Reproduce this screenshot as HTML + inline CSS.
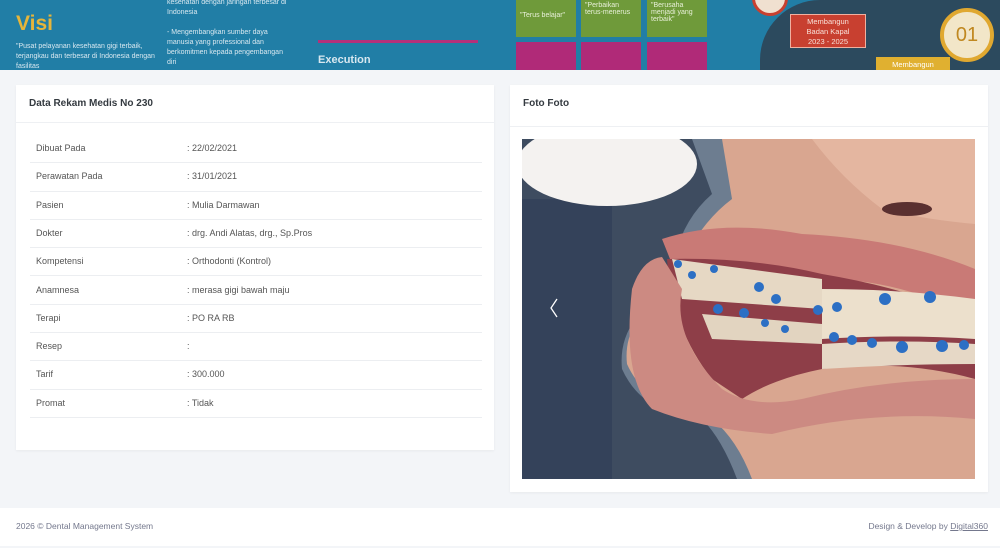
<!DOCTYPE html>
<html><head><meta charset="utf-8"><style>
*{margin:0;padding:0;box-sizing:border-box}
body{width:1000px;height:548px;overflow:hidden;background:#f3f5f8;font-family:"Liberation Sans",sans-serif;color:#495057;position:relative}
.banner{position:absolute;left:0;top:0;width:1000px;height:70px;background:#217ea6;overflow:hidden}
.banner div{position:absolute}
.card{position:absolute;background:#fff;box-shadow:0 1px 3px rgba(0,0,0,.05)}
.ct{font-size:10px;font-weight:bold;color:#343a40;position:absolute;left:13px;top:13px}
.row{position:absolute;left:14px;width:452px;height:28.3px;border-bottom:1px solid #eceef1;font-size:9px;color:#555}
.row span{position:absolute;top:8px}
.footer{position:absolute;left:0;top:508px;width:1000px;height:38px;background:#fff;font-size:8.5px;color:#74788d}
</style></head><body>
<div class="banner">
  <div style="left:16px;top:12px;font-size:21px;font-weight:bold;color:#e6b53a">Visi</div>
  <div style="left:16px;top:42px;font-size:7px;color:#d8e8f0;line-height:10px;width:140px">"Pusat pelayanan kesehatan gigi terbaik, terjangkau dan terbesar di Indonesia dengan fasilitas</div>
  <div style="left:167px;top:-2px;font-size:7px;color:#d8e8f0;line-height:10px;width:125px">kesehatan dengan jaringan terbesar di Indonesia<br><br>- Mengembangkan sumber daya manusia yang professional dan berkomitmen kepada pengembangan diri</div>
  <div style="left:318px;top:40px;width:160px;height:3px;background:#b5307a"></div>
  <div style="left:318px;top:54px;font-size:11px;font-weight:bold;color:#d8e8f0">Execution</div>
  <div style="left:516px;top:0;width:60px;height:37px;background:#6f9a3a;color:#e8f0d8;font-size:7px;padding:12px 4px 0">"Terus belajar"</div>
  <div style="left:581px;top:0;width:60px;height:37px;background:#6f9a3a;color:#e8f0d8;font-size:7px;padding:2px 4px 0">"Perbaikan terus-menerus</div>
  <div style="left:647px;top:0;width:60px;height:37px;background:#6f9a3a;color:#e8f0d8;font-size:7px;padding:2px 4px 0">"Berusaha menjadi yang terbaik"</div>
  <div style="left:516px;top:42px;width:60px;height:28px;background:#b02a78"></div>
  <div style="left:581px;top:42px;width:60px;height:28px;background:#b02a78"></div>
  <div style="left:647px;top:42px;width:60px;height:28px;background:#b02a78"></div>
  <div style="left:760px;top:0;width:240px;height:70px;background:#2c4a5e;border-radius:60px 0 0 0"></div>
  <div style="left:752px;top:-20px;width:36px;height:36px;border-radius:50%;border:3px solid #c84030;background:#f0e0d0"></div>
  <div style="left:790px;top:14px;width:76px;height:34px;background:#c84030;border:1px solid #f0b0a0;color:#f8e0d8;font-size:7.5px;text-align:center;line-height:10px;padding-top:2px">Membangun<br>Badan Kapal<br>2023 - 2025</div>
  <div style="left:940px;top:8px;width:54px;height:54px;border-radius:50%;border:4px solid #e0a830;background:#f2e6c8;color:#c08820;font-size:20px;text-align:center;line-height:46px">01</div>
  <div style="left:876px;top:57px;width:74px;height:16px;background:#e0b030;color:#fff;font-size:7.5px;text-align:center;padding-top:3px">Membangun</div>
</div>

<div class="card" style="left:16px;top:85px;width:478px;height:365px">
  <div class="ct">Data Rekam Medis No 230</div>
  <div style="position:absolute;left:0;top:37px;width:478px;border-top:1px solid #eef0f3"></div>
  <div class="row" style="top:50px"><span style="left:6px">Dibuat Pada</span><span style="left:157px">: 22/02/2021</span></div>
  <div class="row" style="top:78.3px"><span style="left:6px">Perawatan Pada</span><span style="left:157px">: 31/01/2021</span></div>
  <div class="row" style="top:106.6px"><span style="left:6px">Pasien</span><span style="left:157px">: Mulia Darmawan</span></div>
  <div class="row" style="top:134.9px"><span style="left:6px">Dokter</span><span style="left:157px">: drg. Andi Alatas, drg., Sp.Pros</span></div>
  <div class="row" style="top:163.2px"><span style="left:6px">Kompetensi</span><span style="left:157px">: Orthodonti (Kontrol)</span></div>
  <div class="row" style="top:191.5px"><span style="left:6px">Anamnesa</span><span style="left:157px">: merasa gigi bawah maju</span></div>
  <div class="row" style="top:219.8px"><span style="left:6px">Terapi</span><span style="left:157px">: PO RA RB</span></div>
  <div class="row" style="top:248.1px"><span style="left:6px">Resep</span><span style="left:157px">:</span></div>
  <div class="row" style="top:276.4px"><span style="left:6px">Tarif</span><span style="left:157px">: 300.000</span></div>
  <div class="row" style="top:304.7px"><span style="left:6px">Promat</span><span style="left:157px">: Tidak</span></div>
</div>

<div class="card" style="left:510px;top:85px;width:478px;height:407px">
  <div class="ct">Foto Foto</div>
  <div style="position:absolute;left:0;top:41px;width:478px;border-top:1px solid #eef0f3"></div>
  <svg style="position:absolute;left:12px;top:54px" width="453" height="340" viewBox="0 0 453 340">
    <rect width="453" height="340" fill="#3e4c60"/>
    <rect x="0" y="60" width="90" height="280" fill="#34425a"/>
    <ellipse cx="85" cy="25" rx="90" ry="42" fill="#f4f2f0"/>
    <path d="M170 0 L453 0 L453 340 L215 340 Q200 300 180 280 Q120 275 100 230 Q95 180 150 150 Q150 90 190 55 Z" fill="#6d7d90"/>
    <path d="M200 0 L453 0 L453 340 L230 340 Q215 300 190 280 Q125 270 105 225 Q100 180 150 150 Q170 90 210 60 Z" fill="#d9a690"/>
    <path d="M290 0 Q320 40 360 70 Q400 80 453 85 L453 0 Z" fill="#e4b6a0"/>
    <ellipse cx="385" cy="70" rx="25" ry="7" fill="#5a3030"/>
    <path d="M140 100 Q200 80 280 95 Q380 100 453 130 L453 180 Q380 140 300 140 Q220 130 150 125 Z" fill="#c97a76"/>
    <path d="M145 120 Q230 118 300 135 Q390 150 453 180 L453 240 Q380 220 300 230 Q250 240 220 260 L190 240 Q150 190 145 120 Z" fill="#8e3e48"/>
    <path d="M150 120 L300 140 L300 170 L160 160 Z" fill="#e6d8c4"/>
    <path d="M300 150 Q380 150 453 160 L453 200 Q380 195 300 200 Z" fill="#ece0cc"/>
    <path d="M180 175 L300 185 L300 205 L190 200 Z" fill="#e2d4c0"/>
    <path d="M300 205 Q380 200 453 205 L453 225 Q380 225 300 230 Z" fill="#e6d8c6"/>
    <g fill="#2c6fc4">
      <circle cx="156" cy="125" r="4"/><circle cx="170" cy="136" r="4"/><circle cx="192" cy="130" r="4"/><circle cx="237" cy="148" r="5"/><circle cx="254" cy="160" r="5"/><circle cx="196" cy="170" r="5"/><circle cx="222" cy="174" r="5"/><circle cx="243" cy="184" r="4"/><circle cx="263" cy="190" r="4"/><circle cx="296" cy="171" r="5"/><circle cx="315" cy="168" r="5"/><circle cx="363" cy="160" r="6"/><circle cx="408" cy="158" r="6"/><circle cx="312" cy="198" r="5"/><circle cx="330" cy="201" r="5"/><circle cx="350" cy="204" r="5"/><circle cx="380" cy="208" r="6"/><circle cx="420" cy="207" r="6"/><circle cx="442" cy="206" r="5"/>
    </g>
    <path d="M110 150 Q120 120 140 118 L160 150 Q150 200 200 250 Q230 270 280 260 Q360 240 453 240 L453 280 Q350 270 250 295 Q180 290 130 270 Q100 240 110 150 Z" fill="#cc8a82"/>
    <path d="M35 160 l-6 9 l6 9" stroke="#fff" stroke-width="1.3" fill="none"/>
  </svg>
</div>

<div class="footer">
  <div style="position:absolute;left:16px;top:13px">2026 © Dental Management System</div>
  <div style="position:absolute;right:12px;top:13px">Design &amp; Develop by <span style="text-decoration:underline">Digital360</span></div>
</div>
</body></html>
